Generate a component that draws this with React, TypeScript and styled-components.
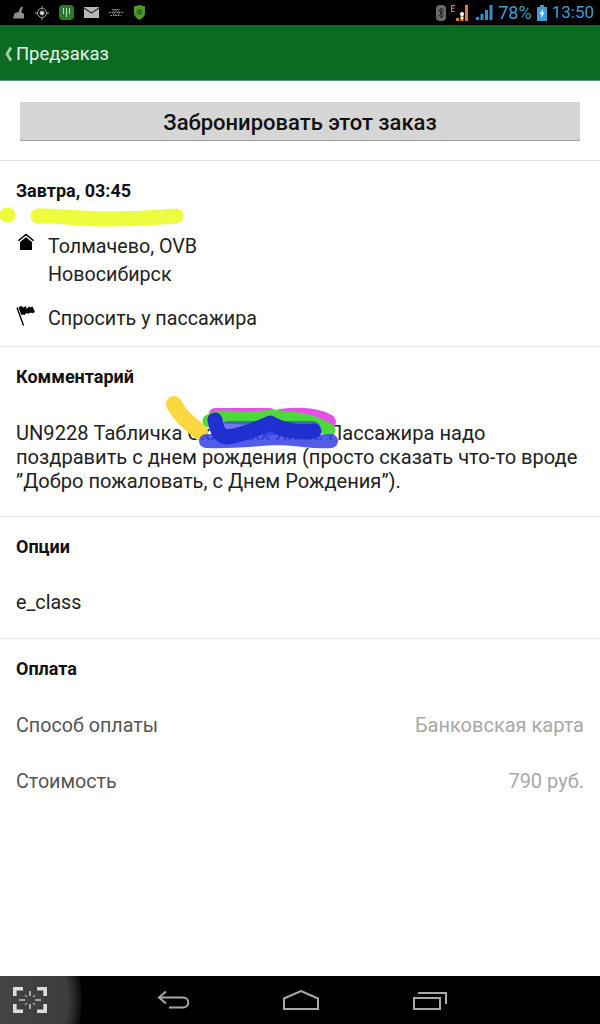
import React from "react";
import styled, { createGlobalStyle } from "styled-components";

const GlobalStyle = createGlobalStyle`
  html, body {
    margin: 0;
    padding: 0;
    background: #fff;
  }
  body {
    font-family: Roboto, "Liberation Sans", sans-serif;
  }
`;

const Page = styled.div`
  position: relative;
  width: 600px;
  height: 1024px;
  display: flex;
  flex-direction: column;
  overflow: hidden;
`;

const StatusBar = styled.div`
  height: 25px;
  background: #000;
  display: flex;
  align-items: center;
  justify-content: space-between;
  padding: 0 6px 0 12px;
  box-sizing: border-box;
`;

const StatusGroup = styled.div<{ $gap: number }>`
  display: flex;
  align-items: center;
  gap: ${(p) => p.$gap}px;
`;

const StatusText = styled.span<{ $size: number }>`
  color: #3f9fd0;
  font-size: ${(p) => p.$size}px;
  line-height: 25px;
`;

const Header = styled.header`
  height: 56px;
  background: #0c6b23;
  border-bottom: 1px solid #5d9c6c;
  box-sizing: border-box;
  display: flex;
  align-items: center;
  padding: 2px 0 0 4px;
  gap: 3px;
  color: #e8f3ea;
  font-size: 18.4px;
`;

const Main = styled.main`
  flex: 1;
  display: flex;
  flex-direction: column;
`;

const ButtonSection = styled.div`
  padding: 21px 20px 19px;
  border-bottom: 1px solid #e2e2e2;
`;

const BookButton = styled.button`
  display: block;
  width: 100%;
  height: 39px;
  border: 0;
  border-bottom: 1px solid #9c9c9c;
  background: #d6d6d6;
  color: #111;
  font-family: inherit;
  font-size: 22px;
  font-weight: 500;
  padding: 2px 0 0;
`;

const Section = styled.section<{ $height: number; $last?: boolean }>`
  height: ${(p) => p.$height}px;
  box-sizing: border-box;
  padding: 0 16px;
  border-bottom: ${(p) => (p.$last ? "0" : "1px solid #e2e2e2")};
`;

const Title = styled.h3<{ $mb: number }>`
  margin: 0 0 ${(p) => p.$mb}px;
  padding-top: 19px;
  font-size: 18px;
  line-height: 22px;
  font-weight: 700;
  color: #111;
`;

const PlaceRow = styled.div<{ $mb?: number }>`
  display: flex;
  gap: 12px;
  margin-bottom: ${(p) => p.$mb ?? 0}px;
`;

const IconSlot = styled.div`
  width: 20px;
  height: 28px;
  flex: none;
  display: flex;
  justify-content: center;
  box-sizing: border-box;
`;

const PlaceText = styled.div`
  font-size: 19.7px;
  line-height: 28px;
  color: #222;
`;

const Body = styled.div`
  font-size: 20.1px;
  line-height: 24px;
  color: #222;
`;

const Plain = styled.div`
  font-size: 19.7px;
  line-height: 28px;
  color: #222;
`;

const PayRow = styled.div`
  display: flex;
  justify-content: space-between;
  height: 56px;
  align-items: center;
  font-size: 19.7px;
  color: #555;
`;

const PayValue = styled.span`
  color: #a8a8a8;
  font-size: 20px;
`;

const NavBar = styled.nav`
  position: relative;
  height: 48px;
  background: #000;
  display: flex;
  align-items: center;
  overflow: hidden;
`;

const NavGlow = styled.div`
  position: absolute;
  left: -118px;
  top: -76px;
  width: 200px;
  height: 200px;
  border-radius: 50%;
  background: radial-gradient(circle closest-side, #474747 0%, #3c3c3c 86%, #262626 93%, #0a0a0a 100%);
`;

const NavIcon = styled.div<{ $left: number }>`
  position: absolute;
  left: ${(p) => p.$left}px;
  top: 0;
  height: 48px;
  display: flex;
  align-items: center;
`;

const Scribbles = styled.svg`
  position: absolute;
  left: 0;
  top: 0;
  width: 600px;
  height: 1024px;
  pointer-events: none;
`;

const Line = styled.path<{ $color: string; $width: number; $opacity?: number }>`
  fill: none;
  stroke: ${(p) => p.$color};
  stroke-width: ${(p) => p.$width}px;
  stroke-linecap: round;
  stroke-linejoin: round;
  opacity: ${(p) => p.$opacity ?? 1};
`;

const BackChevron = () => (
  <svg width="9" height="16" viewBox="0 0 9 16">
    <path d="M7 1.5 3 8l4 6.5" fill="none" stroke="#a5cfae" strokeWidth="2.8" />
  </svg>
);

const HomeIcon = () => (
  <svg width="18" height="18" viewBox="0 0 18 18">
    <path d="M9 0.5 0.8 7.2l1 1.1L9 2.6l7.2 5.7 1-1.1z" fill="#000" />
    <path d="M9 4.2 3 9v8h12V9z" fill="#000" />
  </svg>
);

const FlagIcon = () => (
  <svg width="20" height="21" viewBox="0 0 20 21">
    <path d="M1 2.500l6.500 18" fill="none" stroke="#000" strokeWidth="1.400" />
    <path d="M2.500 2.500 5 .8l2.500 1.700L10 1l.5 3 2.500-2.500 1.500 1 2-1 2.500 5.500-2.500 1.300-2-.8-2 1.200-2-.8-2 2-1.500-.5-1.500.8z" fill="#000" />
  </svg>
);

const CaptureIcon = () => (
  <svg width="34" height="26" viewBox="0 0 34 26" fill="none" stroke="#dcdcdc" strokeWidth="3.600">
    <path d="M1.800 9V1.800h8.200M32.200 9V1.800H24M1.800 17v7.200H10M32.200 17v7.200H24" />
    <path d="M12 13H6M28 13h-6M17 4v5M17 17v5" strokeWidth="1.600" stroke="#c0c0c0" />
    <path d="M12 8l2 2M22 8l-2 2M12 18l2-2M22 18l-2-2" strokeWidth="1.400" stroke="#9a9a9a" />
  </svg>
);

const BackIcon = () => (
  <svg width="34" height="20" viewBox="0 0 34 20" fill="none" stroke="#a8a8a8" strokeWidth="2">
    <path d="M9 1.500 2 7.500l7 6" />
    <path d="M2 7.500h24c7 0 7 10 0 10H12" />
  </svg>
);

const HomeNavIcon = () => (
  <svg width="36" height="20" viewBox="0 0 36 20" fill="none" stroke="#a8a8a8" strokeWidth="2">
    <path d="M1 8.500 18 1l17 7.500V19H1z" />
  </svg>
);

const RecentIcon = () => (
  <svg width="34" height="20" viewBox="0 0 34 20" fill="none" stroke="#a8a8a8" strokeWidth="2">
    <path d="M1 8h26v11H1z" />
    <path d="M5 3h28v11" />
  </svg>
);

const Broom = () => (
  <svg width="13" height="14" viewBox="0 0 14 14">
    <path d="M1 13l2-6 4-1 2-5 3-1-2 6 3 2v5z" fill="#8f8f8f" />
  </svg>
);

const Target = () => (
  <svg width="14" height="14" viewBox="0 0 14 14" fill="none" stroke="#aaa">
    <circle cx="7" cy="7" r="4.500" />
    <circle cx="7" cy="7" r="2" fill="#ddd" />
    <path d="M7 0v2M7 12v2M0 7h2M12 7h2" />
  </svg>
);

const AppBadge = () => (
  <svg width="15" height="15" viewBox="0 0 15 15">
    <rect width="15" height="15" rx="4" fill="#2c7a33" />
    <path d="M4.500 3v6M7.500 3v9M10.500 3v6" stroke="#b9dcb9" strokeWidth="1" />
  </svg>
);

const Mail = () => (
  <svg width="15" height="11" viewBox="0 0 15 11">
    <rect width="15" height="11" fill="#b8b8b8" />
    <path d="M0 1l7.500 5L15 1" fill="none" stroke="#333" strokeWidth="1.200" />
  </svg>
);

const Bug = () => (
  <svg width="14" height="10" viewBox="0 0 14 10" fill="none" stroke="#9a9a9a" strokeDasharray="1.500 1">
    <path d="M0 4.500h14M1.500 7.500h11M3 1.500h8" />
    <path d="M4 3h6v4H4z" />
  </svg>
);

const Shield = () => (
  <svg width="13" height="15" viewBox="0 0 13 15">
    <path d="M1 1.500 6.500 0 12 1.500V8c0 3-3 5.500-5.500 7C4 13.500 1 11 1 8z" fill="#4f9a2c" />
    <circle cx="6.500" cy="7" r="3" fill="#2f6e1a" />
  </svg>
);

const Bluetooth = () => (
  <svg width="10" height="16" viewBox="0 0 10 16">
    <rect width="10" height="16" rx="4" fill="#6a6a6a" />
    <path d="M2.500 4.500l5 6-2.500 2.500v-10l2.500 2.500-5 6" fill="none" stroke="#1c1c1c" strokeWidth="1" />
  </svg>
);

const Signal = ({ color }: { color: string }) => (
  <svg width="17" height="15" viewBox="0 0 17 15">
    <path d="M0 15v-3h3v3zM4.500 15V9h3v6zM9 15V5h3v10zM13.500 15V0h3v15z" fill={color} />
  </svg>
);

const Edge = () => (
  <svg width="20" height="17" viewBox="0 0 20 17">
    <path d="M5 17v-3h3v3zM9.500 17V9h3v8zM14 17V1h3v16z" fill="#e8782a" />
    <path d="M0 1h4v1H1.200v1.800H3.500v1H1.200V7H4v1H0z" fill="#e8782a" />
    <circle cx="11" cy="10" r="2" fill="#fff" />
    <circle cx="11" cy="14" r="1.500" fill="#fff" />
  </svg>
);

const Battery = () => (
  <svg width="10" height="16" viewBox="0 0 10 16">
    <path d="M3 0h4v2h3v14H0V2h3z" fill="#3f9fd0" />
    <path d="M6 4 2.500 9h2L4 13l3.500-5.500h-2z" fill="#fff" />
  </svg>
);

export default function App() {
  return (
    <Page>
      <GlobalStyle />
      <StatusBar>
        <StatusGroup $gap={10}>
          <Broom />
          <Target />
          <AppBadge />
          <Mail />
          <Bug />
          <Shield />
        </StatusGroup>
        <StatusGroup $gap={5}>
          <Bluetooth />
          <Edge />
          <Signal color="#2f8fd0" />
          <StatusText $size={18}>78%</StatusText>
          <Battery />
          <StatusText $size={17}>13:50</StatusText>
        </StatusGroup>
      </StatusBar>
      <Header>
        <BackChevron />
        Предзаказ
      </Header>
      <Main>
        <ButtonSection>
          <BookButton>Забронировать этот заказ</BookButton>
        </ButtonSection>
        <Section $height={186}>
          <Title $mb={31}>Завтра, 03:45</Title>
          <PlaceRow $mb={16}>
            <IconSlot>
              <HomeIcon />
            </IconSlot>
            <PlaceText>
              Толмачево, OVB
              <br />
              Новосибирск
            </PlaceText>
          </PlaceRow>
          <PlaceRow>
            <IconSlot>
              <FlagIcon />
            </IconSlot>
            <PlaceText>Спросить у пассажира</PlaceText>
          </PlaceRow>
        </Section>
        <Section $height={170}>
          <Title $mb={33}>Комментарий</Title>
          <Body>
            UN9228 Табличка Сххххххх Хххх. Пассажира надо поздравить с днем рождения (просто
            сказать что-то вроде ”Добро пожаловать, с Днем Рождения”).
          </Body>
        </Section>
        <Section $height={122}>
          <Title $mb={31}>Опции</Title>
          <Plain>e_class</Plain>
        </Section>
        <Section $height={200} $last>
          <Title $mb={17}>Оплата</Title>
          <PayRow>
            <span>Способ оплаты</span>
            <PayValue>Банковская карта</PayValue>
          </PayRow>
          <PayRow>
            <span>Стоимость</span>
            <PayValue>790 руб.</PayValue>
          </PayRow>
        </Section>
      </Main>
      <NavBar>
        <NavGlow />
        <NavIcon $left={13}>
          <CaptureIcon />
        </NavIcon>
        <NavIcon $left={157}>
          <BackIcon />
        </NavIcon>
        <NavIcon $left={283}>
          <HomeNavIcon />
        </NavIcon>
        <NavIcon $left={413}>
          <RecentIcon />
        </NavIcon>
      </NavBar>
      <Scribbles viewBox="0 0 600 1024">
        <Line $color="#eefc3f" $width={15} d="M7 215h1" />
        <Line $color="#eefc3f" $width={15} d="M38 216c20-1 40 3 70 3 25 0 45-1 68-3" />
        <Line $color="#fbd83f" $width={16} d="M174 404c6 12 14 18 26 28" />
        <Line $color="#e84fe8" $width={12} d="M215 414h55" />
        <Line $color="#e84fe8" $width={16} d="M280 417c15-2 35-3 48 5" />
        <Line $color="#4fd83c" $width={13} d="M209 421c10-7 22-3 35-3 20 0 30-4 40 0 18 0 32 4 45 12" />
        <Line $color="#3340e8" $width={14} $opacity={0.85} d="M206 441c30 1 50-2 70-3 20 0 40 5 55 3" />
        <Line $color="#3340e8" $width={14} $opacity={0.7} d="M228 428h85" />
        <Line $color="#1f2fd0" $width={15} d="M215 420c2 10 4 16 12 17 14-2 30-8 43-14 12 7 28 10 44 8" />
      </Scribbles>
    </Page>
  );
}
